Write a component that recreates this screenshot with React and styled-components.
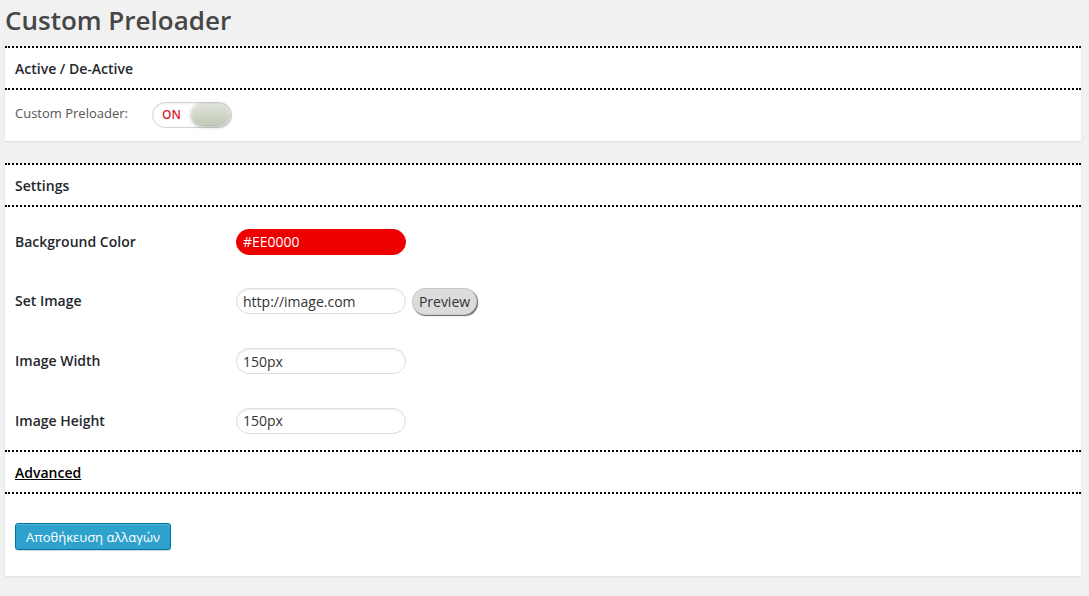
import React from "react";
import styled, { createGlobalStyle } from "styled-components";

const Global = createGlobalStyle`
  html, body { margin: 0; padding: 0; background: #f1f1f1; }
  body { font-family: "Open Sans", "Noto Sans", sans-serif; color: #444; font-size: 13px; }
`;

const Wrap = styled.div`
  padding: 0 8px 20px 5px;
`;

const Title = styled.h1`
  margin: 0;
  height: 46px;
  display: flex;
  align-items: center;
  font-size: 26px;
  font-weight: 600;
  color: #464646;
  padding-bottom: 6px;
  box-sizing: border-box;
`;

const Panel = styled.section`
  background: #fff;
  box-shadow: 0 1px 2px rgba(0, 0, 0, 0.08);
  margin-bottom: ${(p) => p.$gap || 0}px;
`;

const SectionHead = styled.h3`
  margin: 0;
  height: 40px;
  display: flex;
  align-items: center;
  padding: 0 10px;
  font-size: 14px;
  font-weight: 600;
  color: #23282d;
  border-top: 2px dotted #000;
  border-bottom: 2px dotted #000;
`;

const Link = styled.a`
  color: #000;
  text-decoration: underline;
  cursor: pointer;
`;

const SwitchRow = styled.div`
  height: 51px;
  box-sizing: border-box;
  display: flex;
  align-items: center;
  padding: 0 10px 2px;
`;

const SwitchLabel = styled.span`
  width: 137px;
  font-size: 13px;
  color: #555;
  margin-top: -4px;
`;

const Switch = styled.div`
  position: relative;
  width: 80px;
  height: 26px;
  box-sizing: border-box;
  border: 1px solid #d4d4d4;
  border-radius: 13px;
  background: #fff;
  box-shadow: inset 0 1px 2px rgba(0, 0, 0, 0.08);
  display: flex;
  align-items: center;
  padding-left: 9px;
`;

const SwitchText = styled.span`
  font-size: 12px;
  font-weight: 600;
  color: #d4243a;
`;

const Knob = styled.span`
  position: absolute;
  right: 2px;
  top: 1px;
  width: 37px;
  height: 21px;
  border-radius: 11px;
  background: linear-gradient(#e0e4d9, #c3cab8);
  box-shadow: 0 1px 4px rgba(60, 70, 50, 0.6);
  filter: blur(0.5px);
`;

const Fields = styled.div`
  padding-top: 5px;
`;

const FieldRow = styled.div`
  height: ${(p) => p.$h}px;
  display: flex;
  align-items: center;
  padding: 0 10px;
`;

const FieldLabel = styled.label`
  width: 221px;
  font-size: 14px;
  font-weight: 600;
  color: #23282d;
  margin-top: -1px;
`;

const Input = styled.input`
  width: 170px;
  height: 26px;
  box-sizing: border-box;
  border: 1px solid ${(p) => (p.$fill ? p.$fill : "#ddd")};
  border-radius: 13px;
  background: ${(p) => p.$fill || "#fff"};
  color: ${(p) => (p.$fill ? "#fff" : "#333")};
  box-shadow: ${(p) => (p.$fill ? "none" : "inset 0 1px 2px rgba(0,0,0,0.07)")};
  padding: 0 6px;
  font-family: "Open Sans", "Noto Sans", sans-serif;
  font-size: 14px;
  outline: none;
`;

const PreviewButton = styled.button`
  margin-left: 6px;
  height: 27px;
  width: 65px;
  padding: 0;
  border: 1px solid #c8c8c8;
  border-radius: 13px;
  background: #dcdcdc;
  box-shadow: 1px 1px 1px #666;
  font-family: "Open Sans", "Noto Sans", sans-serif;
  font-size: 14px;
  color: #333;
`;

const Footer = styled.div`
  padding: 29px 10px 26px;
`;

const SaveButton = styled.button`
  height: 27px;
  padding: 0 10px;
  border: 1px solid #0074a2;
  border-radius: 3px;
  background: #2ea2cc;
  box-shadow: inset 0 1px 0 rgba(120, 200, 230, 0.5), 0 1px 0 rgba(0, 0, 0, 0.15);
  color: #fff;
  font-family: "Open Sans", "Noto Sans", sans-serif;
  font-size: 13px;
  width: 156px;
`;

const fields = [
  { label: "Background Color", value: "#EE0000", fill: "#ee0000", h: 59 },
  { label: "Set Image", value: "http://image.com", preview: true, h: 60 },
  { label: "Image Width", value: "150px", h: 60 },
  { label: "Image Height", value: "150px", h: 59 },
];

export default function App() {
  return (
    <Wrap>
      <Global />
      <Title>Custom Preloader</Title>

      <Panel $gap={22}>
        <SectionHead>Active / De-Active</SectionHead>
        <SwitchRow>
          <SwitchLabel>Custom Preloader:</SwitchLabel>
          <Switch>
            <SwitchText>ON</SwitchText>
            <Knob />
          </Switch>
        </SwitchRow>
      </Panel>

      <Panel>
        <SectionHead>Settings</SectionHead>
        <Fields>
          {fields.map((f) => (
            <FieldRow key={f.label} $h={f.h}>
              <FieldLabel>{f.label}</FieldLabel>
              <Input $fill={f.fill} defaultValue={f.value} />
              {f.preview && <PreviewButton>Preview</PreviewButton>}
            </FieldRow>
          ))}
        </Fields>
        <SectionHead>
          <Link>Advanced</Link>
        </SectionHead>
        <Footer>
          <SaveButton>Αποθήκευση αλλαγών</SaveButton>
        </Footer>
      </Panel>
    </Wrap>
  );
}
